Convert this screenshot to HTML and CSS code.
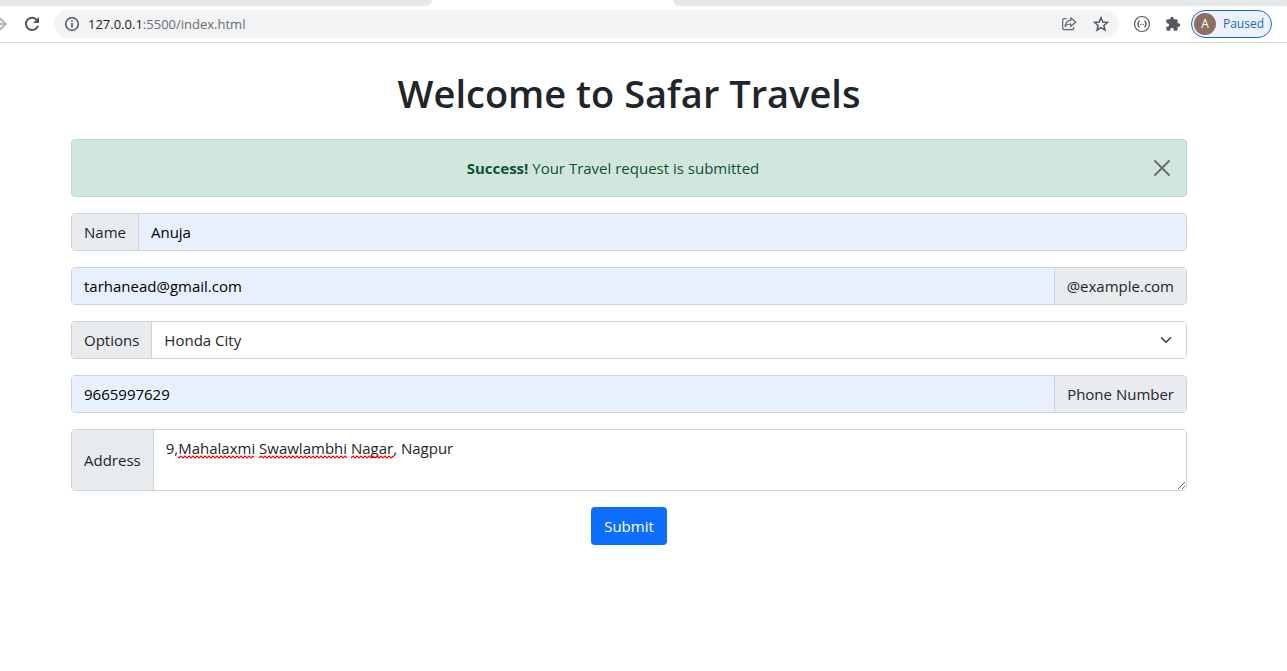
FILE: index.html
```html
<!DOCTYPE html>
<html lang="en">
<head>
<meta charset="utf-8">
<meta name="viewport" content="width=device-width, initial-scale=1">
<title>Safar Travels</title>
<link rel="stylesheet" href="styles.css">
</head>
<body>
<header class="browser">
  <div class="tabstrip">
    <div class="tabs-before"></div>
    <div class="tabs-after"></div>
  </div>
  <div class="toolbar">
    <button class="tool forward" type="button" aria-label="Forward">
      <svg width="8" height="16" viewBox="0 0 8 16" fill="none" stroke="#b4b6b9" stroke-width="2"><path d="M0 8H6M0 2.300L5.700 8L0 13.700"/></svg>
    </button>
    <button class="tool" type="button" aria-label="Reload">
      <svg width="16" height="16" viewBox="0 0 16 16"><path d="M13.200 4.300A6.200 6.200 0 1 0 14 9.800" fill="none" stroke="#55595e" stroke-width="2"/><path d="M15 1V7H9Z" fill="#55595e"/></svg>
    </button>
    <div class="omnibox">
      <button class="tool" type="button" aria-label="Site information">
        <svg width="16" height="16" viewBox="0 0 16 16"><circle cx="8" cy="8" r="6.300" fill="none" stroke="#55595e" stroke-width="1.500"/><path d="M7.200 7H8.800V11.500H7.200ZM7.200 4.300H8.800V5.900H7.200Z" fill="#55595e"/></svg>
      </button>
      <div class="url"><span class="host">127.0.0.1</span>:5500/index.html</div>
      <button class="tool" type="button" aria-label="Share">
        <svg width="16" height="16" viewBox="0 0 16 16" fill="none" stroke="#62666b" stroke-width="1.200" stroke-linejoin="round"><path d="M5.500 2.700H3.200Q1.700 2.700 1.700 4.200V12.300Q1.700 13.700 3.200 13.700H11.200Q12.700 13.700 12.700 12.300V11"/><path d="M9.700 1.800L14.700 6.200L9.700 10.300V8Q6 7.800 4.200 10.500Q4.600 4.800 9.700 4.200Z"/></svg>
      </button>
      <button class="tool" type="button" aria-label="Bookmark this page">
        <svg width="16" height="16" viewBox="0 0 16 16"><path d="M8 1.700L9.800 6L14.500 6.400L10.900 9.500L12 14.100L8 11.600L4 14.100L5.100 9.500L1.500 6.400L6.200 6Z" fill="none" stroke="#55595e" stroke-width="1.500"/></svg>
      </button>
    </div>
    <button class="tool" type="button" aria-label="JSON viewer">
      <svg width="18" height="18" viewBox="0 0 18 18" fill="none" stroke="#55595e"><circle cx="9" cy="9" r="7.500" stroke-width="1.200"/><path stroke-width="1.300" d="M6.700 6.200Q5.300 6.200 5.300 7.400V8.300L4.600 9L5.300 9.700V10.600Q5.300 11.800 6.700 11.800M11.300 6.200Q12.700 6.200 12.700 7.400V8.300L13.400 9L12.700 9.700V10.600Q12.700 11.800 11.300 11.800"/><path stroke-opacity=".8" d="M7 9.500H8M8.500 9.500H9.500M10 9.500H11"/></svg>
    </button>
    <button class="tool" type="button" aria-label="Extensions">
      <svg width="16" height="16" viewBox="0 0 24 24"><path fill="#55595e" d="M20.500 11H19V7c0-1.100-.9-2-2-2h-4V3.500a2.500 2.500 0 0 0-5 0V5H4c-1.100 0-2 .9-2 2v3.800h1.500a2.700 2.700 0 0 1 0 5.400H2V20c0 1.100.9 2 2 2h3.800v-1.500a2.700 2.700 0 0 1 5.400 0V22H17c1.100 0 2-.9 2-2v-4h1.500a2.500 2.500 0 0 0 0-5z"/></svg>
    </button>
    <button class="profile" type="button"><span class="avatar">A</span>Paused</button>
  </div>
</header>

<main class="container">
  <h1 class="title">Welcome to Safar Travels</h1>
  <div class="alert" role="alert">
    <p class="alert-text"><strong>Success!</strong> Your Travel request is submitted</p>
    <button class="close" type="button" aria-label="Close">
      <svg width="16" height="16" viewBox="0 0 16 16" stroke="#000" stroke-width="2" stroke-linecap="round"><path d="M1 1L15 15M15 1L1 15"/></svg>
    </button>
  </div>
  <form class="form">
    <div class="group">
      <label class="addon" for="name">Name</label>
      <input class="control filled" id="name" type="text" value="Anuja">
    </div>
    <div class="group">
      <input class="control filled" id="email" type="text" value="tarhanead@gmail.com">
      <label class="addon" for="email">@example.com</label>
    </div>
    <div class="group">
      <label class="addon" for="car">Options</label>
      <div class="select-wrap">
        <select class="control select" id="car"><option selected>Honda City</option></select>
        <svg class="chevron" width="12" height="12" viewBox="0 0 16 16" fill="none" stroke="#343a40" stroke-width="2" stroke-linecap="round" stroke-linejoin="round"><path d="M2 5L8 11L14 5"/></svg>
      </div>
    </div>
    <div class="group">
      <input class="control filled" id="phone" type="text" value="9665997629">
      <label class="addon" for="phone">Phone Number</label>
    </div>
    <div class="group">
      <label class="addon" for="address">Address</label>
      <div class="address-wrap">
        <textarea class="control address" id="address" spellcheck="false">9,Mahalaxmi Swawlambhi Nagar, Nagpur</textarea>
        <svg class="spelling" width="230" height="4" viewBox="0 0 230 4" aria-hidden="true">
          <defs><pattern id="wave" width="4" height="4" patternUnits="userSpaceOnUse"><path d="M-1 0L1 2L3 0L5 2" transform="translate(0 1)" fill="none" stroke="#f00" stroke-width="1.200"/></pattern></defs>
          <path d="M0 0H76V4H0ZM81 0H169V4H81ZM173 0H216V4H173Z" fill="url(#wave)"/>
        </svg>
      </div>
    </div>
    <button class="submit" type="submit">Submit</button>
  </form>
</main>
</body>
</html>
```
FILE: styles.css
```css
* {
  box-sizing: border-box;
}

body {
  margin: 0;
  background: #fff;
  color: #212529;
  font: 15px/24px "Open Sans", "Noto Sans", sans-serif;
}

button,
input,
select,
textarea {
  font: inherit;
}

.browser {
  border-bottom: 1px solid #d9dadc;
  overflow: hidden;
}

.tabstrip {
  display: flex;
  gap: 241px;
  height: 6px;
}

.tabs-before {
  width: 432px;
  background: #e5e9ec;
  border-bottom-right-radius: 6px;
}

.tabs-after {
  flex: 1;
  background: #e5e9ec;
  border-bottom-left-radius: 6px;
}

.toolbar {
  display: flex;
  align-items: center;
  gap: 14px;
  padding: 4px 15px 4px 0;
}

.tool {
  display: flex;
  padding: 0;
  border: 0;
  background: none;
}

.forward {
  margin-right: 2px;
}

.omnibox {
  display: flex;
  flex: 1;
  align-items: center;
  gap: 16px;
  height: 28px;
  padding: 0 10px;
  border-radius: 14px;
  background: #f1f3f4;
}

.url {
  flex: 1;
  margin-left: -8px;
  color: #6b6f73;
  font-size: 13px;
  line-height: 20px;
}

.host {
  color: #202124;
}

.profile {
  display: flex;
  align-items: center;
  gap: 7px;
  height: 28px;
  margin-left: -4px;
  padding: 0 7px 0 2px;
  border: 1px solid #1b66c9;
  border-radius: 14px;
  background: #edf2fa;
  color: #1b66c9;
  font-size: 12px;
  line-height: 20px;
}

.avatar {
  width: 22px;
  height: 22px;
  border-radius: 50%;
  background: #8d6e63;
  color: #fff;
  line-height: 22px;
  text-align: center;
}

.container {
  padding: 26px 100px 24px 71px;
}

.title {
  margin: 0 0 22px;
  font-size: 38px;
  font-weight: 600;
  line-height: 48px;
  text-align: center;
}

.alert {
  display: flex;
  align-items: center;
  gap: 16px;
  margin-bottom: 16px;
  padding: 16px;
  border: 1px solid #badbcc;
  border-radius: 4px;
  background: #d1e7dd;
  color: #0f5132;
}

.alert-text {
  flex: 1;
  margin: 0;
  text-align: center;
}

.close {
  display: flex;
  padding: 0;
  border: 0;
  background: none;
  opacity: 0.5;
}

.form {
  display: flex;
  flex-direction: column;
  gap: 16px;
}

.group {
  display: flex;
  border: 1px solid #ced4da;
  border-radius: 4px;
  overflow: hidden;
}

.addon {
  display: flex;
  align-items: center;
  padding: 6px 12px;
  background: #e9ecef;
}

.addon:first-child {
  border-right: 1px solid #ced4da;
}

.addon:last-child {
  border-left: 1px solid #ced4da;
}

.control {
  display: block;
  flex: 1;
  width: 100%;
  min-width: 0;
  height: 36px;
  padding: 6px 12px;
  border: 0;
  background: #fff;
  color: #212529;
}

.filled {
  background: #e8f0fe;
  color: #000;
}

.select-wrap,
.address-wrap {
  position: relative;
  flex: 1;
}

.select {
  appearance: none;
}

.chevron {
  position: absolute;
  top: 12px;
  right: 14px;
  pointer-events: none;
}

.address {
  height: 60px;
  resize: vertical;
}

.spelling {
  position: absolute;
  top: 25px;
  left: 24px;
  pointer-events: none;
}

.submit {
  align-self: center;
  padding: 7px 13px;
  border: 0;
  border-radius: 4px;
  background: #0d6efd;
  color: #fff;
}
```
